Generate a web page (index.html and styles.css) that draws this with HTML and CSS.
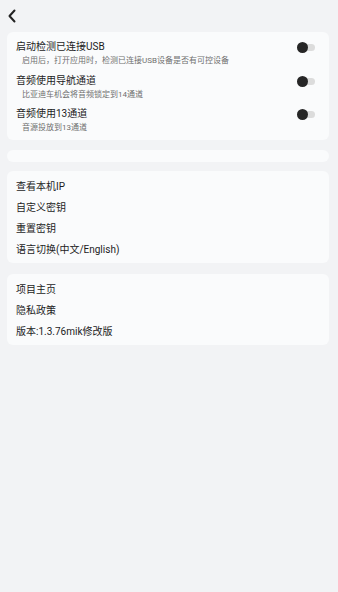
FILE: index.html
```html
<!DOCTYPE html>
<html>
<head>
    <meta charset="utf-8" />
    <title>设置</title>
    <link rel="stylesheet" href="styles.css">
</head>
<body>
    <header class="topbar">
        <svg class="back" width="10" height="14" viewBox="0 0 10 14">
            <path d="M7.5 1.5 L2.5 7 L7.5 12.5" fill="none" stroke="#222" stroke-width="2" stroke-linecap="round" stroke-linejoin="round" />
        </svg>
    </header>

    <div class="kartya kapcsolok">
        <div class="sor">
            <div class="szoveg">
                <div class="cim">启动检测已连接USB</div>
                <div class="leiras">启用后，打开应用时，检测已连接USB设备是否有可控设备</div>
            </div>
            <span class="kapcsolo"><span class="gomb"></span></span>
        </div>
        <div class="sor">
            <div class="szoveg">
                <div class="cim">音频使用导航通道</div>
                <div class="leiras">比亚迪车机会将音频锁定到14通道</div>
            </div>
            <span class="kapcsolo"><span class="gomb"></span></span>
        </div>
        <div class="sor">
            <div class="szoveg">
                <div class="cim">音频使用13通道</div>
                <div class="leiras">音源投放到13通道</div>
            </div>
            <span class="kapcsolo"><span class="gomb"></span></span>
        </div>
    </div>

    <div class="kartya ures"></div>

    <div class="kartya lista">
        <div class="elem">查看本机IP</div>
        <div class="elem">自定义密钥</div>
        <div class="elem">重置密钥</div>
        <div class="elem">语言切换(中文/English)</div>
    </div>

    <div class="kartya lista">
        <div class="elem">项目主页</div>
        <div class="elem">隐私政策</div>
        <div class="elem">版本:1.3.76mik修改版</div>
    </div>
</body>
</html>
```

FILE: styles.css
```css
body {
    margin: 0;
    background-color: #f2f3f5;
    font-family: Roboto, "Noto Sans CJK SC", sans-serif;
    color: #1c1c1c;
}

.topbar {
    height: 32px;
    display: flex;
    align-items: center;
    padding-left: 7px;
}

.back {
    display: block;
    margin-top: -1px;
}

.kartya {
    background-color: #fafbfc;
    border-radius: 6px;
    margin: 0 9px 0 7px;
}

.kapcsolok {
    padding: 5px 0 2px 0;
}

.sor {
    display: flex;
    align-items: flex-start;
    padding: 3px 0 3.5px 0;
}

.szoveg {
    flex: 1;
}

.cim {
    font-size: 10px;
    line-height: 14px;
    padding-left: 9px;
}

.leiras {
    font-size: 8px;
    line-height: 12px;
    margin-top: 1px;
    padding-left: 15px;
    color: #6f6f6f;
}

.kapcsolo {
    position: relative;
    width: 15px;
    height: 7px;
    margin: 4px 14px 0 0;
    border-radius: 4px;
    background-color: #dcdcdc;
}

.gomb {
    position: absolute;
    left: -3px;
    top: -2px;
    width: 11px;
    height: 11px;
    border-radius: 50%;
    background-color: #262626;
}

.ures {
    height: 12px;
    margin-top: 10px;
    margin-bottom: 9px;
}

.lista {
    padding: 5px 0 3px 0;
    margin-bottom: 11px;
}

.elem {
    font-size: 10px;
    line-height: 21px;
    padding-left: 9px;
}
```
